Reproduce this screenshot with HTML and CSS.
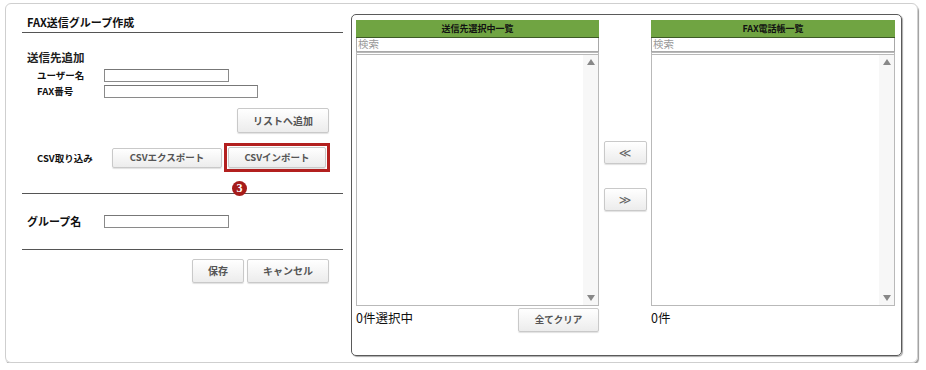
FILE: index.html
```html
<!DOCTYPE html>
<html lang="ja">
<head>
<meta charset="utf-8">
<title>FAX送信グループ作成</title>
<link rel="stylesheet" href="styles.css">
</head>
<body>
<div class="frame">
  <div class="left">
    <div class="title">FAX送信グループ作成</div>
    <div class="section">送信先追加</div>
    <div class="row row-first">
      <span class="lbl">ユーザー名</span>
      <span class="inp inp-short"></span>
    </div>
    <div class="row row-second">
      <span class="lbl">FAX番号</span>
      <span class="inp inp-long"></span>
    </div>
    <div class="addrow">
      <button class="btn btn-add">リストへ追加</button>
    </div>
    <div class="csvrow">
      <span class="csvlbl">CSV取り込み</span>
      <button class="btn btn-export">CSVエクスポート</button>
      <span class="highlight">
        <button class="btn btn-import">CSVインポート</button>
        <span class="badge">3</span>
      </span>
    </div>
    <div class="divider div1"></div>
    <div class="grouprow">
      <span class="glbl">グループ名</span>
      <span class="inp inp-short"></span>
    </div>
    <div class="divider div2"></div>
    <div class="actions">
      <button class="btn btn-save">保存</button>
      <button class="btn btn-cancel">キャンセル</button>
    </div>
  </div>
  <div class="panel">
    <div class="listcol listcol-a">
      <div class="lhead">送信先選択中一覧</div>
      <div class="search">検索</div>
      <div class="listbox">
        <div class="listbody"></div>
        <div class="scroll"><span class="up"></span><span class="down"></span></div>
      </div>
      <div class="lfoot">
        <span class="count">0件選択中</span>
        <button class="btn btn-clear">全てクリア</button>
      </div>
    </div>
    <div class="midcol">
      <button class="btn btn-arrow arrow-l">≪</button>
      <button class="btn btn-arrow arrow-r">≫</button>
    </div>
    <div class="listcol listcol-b">
      <div class="lhead">FAX電話帳一覧</div>
      <div class="search">検索</div>
      <div class="listbox">
        <div class="listbody"></div>
        <div class="scroll"><span class="up"></span><span class="down"></span></div>
      </div>
      <div class="lfoot">
        <span class="count">0件</span>
      </div>
    </div>
  </div>
</div>
</body>
</html>
```
FILE: styles.css
```css
* { box-sizing: border-box; }
html, body { background: #fff; }
body {
  margin: 0;
  padding: 3px 0 0 5px;
  font-family: "Noto Sans CJK JP", "Noto Sans", sans-serif;
  color: #111;
}
.frame {
  width: 913px;
  height: 360px;
  border: 1px solid #cfcfcf;
  border-radius: 6px;
  box-shadow: 1px 2px 1px #9a9a9a;
  display: flex;
  padding-left: 16px;
}
.left {
  width: 321px;
  flex: none;
}
.title {
  margin-top: 11px;
  line-height: 14px;
  height: 18px;
  padding: 0 0 3px 5px;
  font-size: 11px;
  font-weight: 700;
  border-bottom: 1px solid #555;
}
.section {
  margin-top: 16px;
  padding-left: 5px;
  line-height: 16px;
  font-size: 11.5px;
  font-weight: 700;
  color: #222;
}
.row {
  display: flex;
  align-items: center;
  height: 14px;
  padding-left: 15px;
}
.row-first { margin-top: 3px; }
.row-second { margin-top: 2px; }
.lbl {
  width: 67px;
  font-size: 9.5px;
  font-weight: 700;
  line-height: 14px;
}
.inp {
  display: block;
  height: 13px;
  border: 1px solid #8a8a8a;
  border-top-color: #777;
  background: #fff;
}
.inp-short { width: 125px; }
.inp-long { width: 154px; }
.btn {
  font-family: "Noto Sans CJK JP", "Noto Sans", sans-serif;
  font-weight: 700;
  font-size: 9.5px;
  color: #555;
  background: linear-gradient(#ffffff, #ececec);
  border: 1px solid #c9c9c9;
  border-radius: 2px;
  box-shadow: 0 1px 1px rgba(0,0,0,0.12);
  padding: 0;
  line-height: 1;
}
.addrow {
  display: flex;
  justify-content: flex-end;
  padding-right: 14px;
  margin-top: 10px;
}
.btn-add { width: 92px; height: 25px; font-size: 10px; }
.csvrow {
  display: flex;
  align-items: center;
  margin-top: 10px;
  height: 29px;
  padding-left: 15px;
}
.csvlbl {
  width: 75px;
  font-size: 9.5px;
  font-weight: 700;
}
.btn-export { width: 110px; height: 20px; }
.highlight {
  position: relative;
  margin-left: 2px;
  width: 106px;
  height: 29px;
  border: 3px solid #b3201f;
  padding: 1px;
  display: flex;
}
.btn-import { width: 98px; height: 21px; }
.badge {
  position: absolute;
  left: 5px;
  top: 35px;
  width: 15px;
  height: 15px;
  border-radius: 50%;
  background: #a61c1a;
  color: #fff;
  font-family: "Liberation Serif", serif;
  font-weight: 700;
  font-size: 12px;
  line-height: 15px;
  text-align: center;
}
.divider { border-top: 1px solid #555; }
.div1 { margin-top: 21px; }
.grouprow {
  display: flex;
  align-items: center;
  height: 14px;
  margin-top: 20px;
  padding-left: 5px;
}
.glbl {
  width: 77px;
  font-size: 11px;
  font-weight: 700;
}
.div2 { margin-top: 21px; }
.actions {
  display: flex;
  justify-content: flex-end;
  gap: 3px;
  padding-right: 14px;
  margin-top: 9px;
}
.btn-save { width: 52px; height: 24px; font-size: 10px; }
.btn-cancel { width: 82px; height: 24px; font-size: 10px; }

.panel {
  margin-top: 10px;
  margin-left: 8px;
  width: 551px;
  height: 342px;
  border: 1px solid #5a5a5a;
  border-radius: 5px;
  box-shadow: 1px 1px 1px #aaa;
  padding: 5px 0 0 4px;
  display: flex;
  align-items: flex-start;
}
.listcol { display: flex; flex-direction: column; }
.listcol-a { width: 243px; }
.listcol-b { width: 244px; }
.lhead {
  height: 18px;
  background: #70a442;
  border-bottom: 1px solid #3d5a26;
  font-size: 9px;
  font-weight: 700;
  line-height: 17px;
  text-align: center;
  color: #111;
}
.search {
  height: 14px;
  border: 1px solid #a8a8a8;
  border-top: none;
  font-size: 10.5px;
  line-height: 12px;
  color: #999;
  padding-left: 1px;
}
.listbox {
  height: 254px;
  border: 2px solid #b9b9b9;
  border-style: double;
  border-width: 3px 1px 1px 1px;
  display: flex;
  background: #fff;
}
.listbody { flex: 1; }
.scroll {
  width: 15px;
  background: #f7f7f7;
  display: flex;
  flex-direction: column;
  justify-content: space-between;
  align-items: center;
  padding: 4px 0 4px;
}
.up {
  width: 0; height: 0;
  border-left: 4px solid transparent;
  border-right: 4px solid transparent;
  border-bottom: 6px solid #888;
}
.down {
  width: 0; height: 0;
  border-left: 4px solid transparent;
  border-right: 4px solid transparent;
  border-top: 6px solid #888;
}
.lfoot {
  display: flex;
  justify-content: space-between;
  align-items: flex-start;
  margin-top: 2px;
}
.count {
  font-size: 12.5px;
  line-height: 20px;
  color: #111;
}
.btn-clear { width: 81px; height: 24px; font-size: 9.5px; }
.midcol {
  width: 52px;
  display: flex;
  flex-direction: column;
  align-items: center;
  padding-top: 121px;
}
.btn-arrow {
  width: 43px;
  height: 23px;
  font-size: 12px;
  font-weight: 400;
  color: #666;
  font-family: "DejaVu Sans", sans-serif;
}
.arrow-r { margin-top: 24px; }
```
